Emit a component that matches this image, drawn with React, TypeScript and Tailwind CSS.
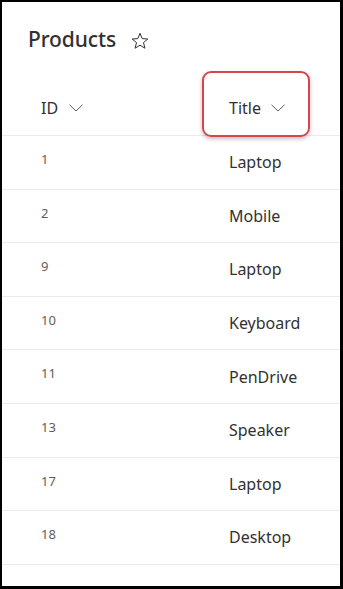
import { useState } from "react";

const rows = [
  { id: 1, title: "Laptop" },
  { id: 2, title: "Mobile" },
  { id: 9, title: "Laptop" },
  { id: 10, title: "Keyboard" },
  { id: 11, title: "PenDrive" },
  { id: 13, title: "Speaker" },
  { id: 17, title: "Laptop" },
  { id: 18, title: "Desktop" },
];

const Chevron = () => (
  <svg width="14" height="8" viewBox="0 0 14 8" fill="none" className="shrink-0">
    <path d="M0.5 0.8 L7 7 L13.5 0.8" stroke="#605e5c" strokeWidth="1" />
  </svg>
);

const Star = () => (
  <svg width="18" height="18" viewBox="0 0 18 18" fill="none">
    <path
      d="M9 1.3 L11.2 6.6 L16.8 7 L12.5 10.6 L13.9 16.2 L9 13.2 L4.1 16.2 L5.5 10.6 L1.2 7 L6.8 6.6 Z"
      stroke="#323130"
      strokeWidth="1"
      strokeLinejoin="round"
    />
  </svg>
);

const App = () => {
  const [starred, setStarred] = useState(false);

  return (
    <div
      className="w-[343px] h-[589px] bg-white border-black border-t-[2px] border-l-[2px] border-r-[3px] border-b-[3px] overflow-hidden text-[#323130]"
      style={{ fontFamily: '"Noto Sans", "Open Sans", sans-serif' }}
    >
      {/* Title */}
      <div className="flex items-center h-[78px] pl-[26px] pb-[2px] gap-[15px]">
        <h1 className="text-[21px] font-medium tracking-[-0.1px]">Products</h1>
        <button onClick={() => setStarred(!starred)} className="mt-[1px]">
          <Star />
        </button>
      </div>

      {/* Column headers */}
      <div className="flex items-center h-[56px] border-b border-[#edebe9]">
        <div className="w-[227px] pl-[39px] flex items-center gap-[11px]">
          <span className="text-[16px]">ID</span>
          <Chevron />
        </div>
        <div className="relative flex items-center gap-[10px]">
          <span className="text-[16px]">Title</span>
          <Chevron />
          <div className="absolute left-[-27px] top-[-25px] w-[108px] h-[66px] rounded-[9px] border-2 border-[#d9434b] shadow-[0_2px_4px_rgba(0,0,0,0.25)]" />
        </div>
      </div>

      {/* Rows */}
      {rows.map((row) => (
        <div key={row.id} className="flex items-center h-[53.6px] border-b border-[#edebe9]">
          <div className="w-[227px] pl-[39px] pb-[5px] text-[13px] text-[#605e5c]">{row.id}</div>
          <div className="text-[16px]">{row.title}</div>
        </div>
      ))}
    </div>
  );
};

export default App;
